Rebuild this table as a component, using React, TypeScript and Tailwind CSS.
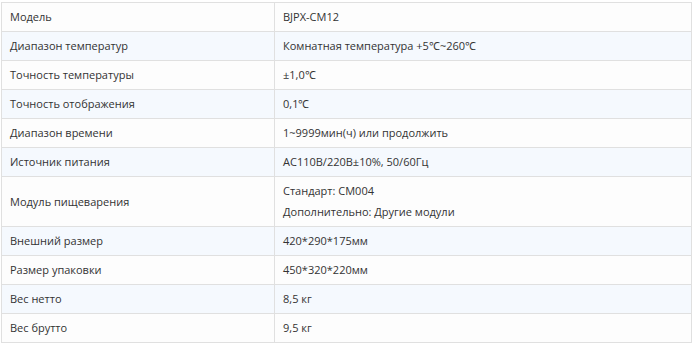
const rows: { label: string; value: string[] }[] = [
  { label: "Модель", value: ["BJPX-CM12"] },
  { label: "Диапазон температур", value: ["Комнатная температура +5℃~260℃"] },
  { label: "Точность температуры", value: ["±1,0℃"] },
  { label: "Точность отображения", value: ["0,1℃"] },
  { label: "Диапазон времени", value: ["1~9999мин(ч) или продолжить"] },
  { label: "Источник питания", value: ["AC110В/220В±10%, 50/60Гц"] },
  { label: "Модуль пищеварения", value: ["Стандарт: CM004", "Дополнительно: Другие модули"] },
  { label: "Внешний размер", value: ["420*290*175мм"] },
  { label: "Размер упаковки", value: ["450*320*220мм"] },
  { label: "Вес нетто", value: ["8,5 кг"] },
  { label: "Вес брутто", value: ["9,5 кг"] },
];

export default function App() {
  return (
    <div className="bg-white pt-[2px] pl-[1px] w-[694px] h-[344px] overflow-hidden">
      <table className="w-[691px] border-collapse text-[11px] leading-[18px] text-[#333] font-['Open_Sans',sans-serif]">
        <tbody>
          {rows.map((r, i) => (
            <tr key={r.label} className={i % 2 === 1 ? "bg-[#f5f9fe]" : "bg-[#fdfdfd]"}>
              <td className="w-[273px] border border-[#e0e0e0] px-[8px] py-[5px] align-middle">{r.label}</td>
              <td className="border border-[#e0e0e0] px-[8px] py-[5px] align-middle">
                <div className="flex flex-col gap-[3px]">
                  {r.value.map((v) => (
                    <p key={v}>{v}</p>
                  ))}
                </div>
              </td>
            </tr>
          ))}
        </tbody>
      </table>
    </div>
  );
}
